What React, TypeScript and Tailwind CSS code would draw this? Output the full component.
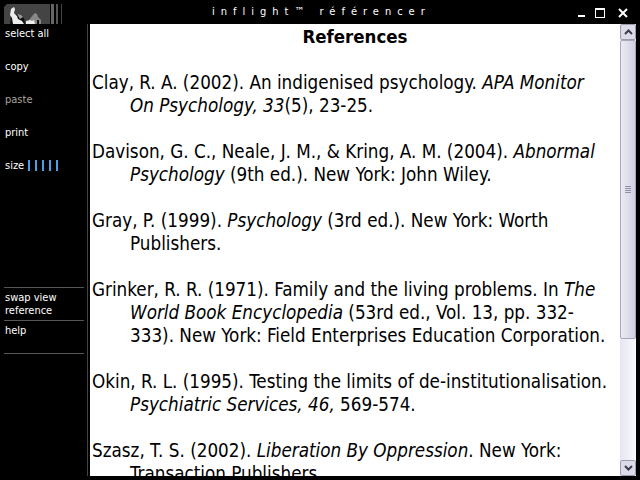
const refs = [
  [<>Clay, R. A. (2002). An indigenised psychology. <i>APA Monitor</i></>, <><i>On Psychology, 33</i>(5), 23-25.</>],
  [<>Davison, G. C., Neale, J. M., &amp; Kring, A. M. (2004). <i>Abnormal</i></>, <><i>Psychology</i> (9th ed.). New York: John Wiley.</>],
  [<>Gray, P. (1999). <i>Psychology</i> (3rd ed.). New York: Worth</>, <>Publishers.</>],
  [<>Grinker, R. R. (1971). Family and the living problems. In <i>The</i></>, <><i>World Book Encyclopedia</i> (53rd ed., Vol. 13, pp. 332-</>, <>333). New York: Field Enterprises Education Corporation.</>],
  [<>Okin, R. L. (1995). Testing the limits of de-institutionalisation.</>, <><i>Psychiatric Services, 46,</i> 569-574.</>],
  [<>Szasz, T. S. (2002). <i>Liberation By Oppression</i>. New York:</>, <>Transaction Publishers.</>],
];

function Sidebar() {
  return (
    <div className="flex w-[87px] shrink-0 flex-col text-[11px] leading-[13px] text-white">
      <div className="flex h-[165px] flex-col">
        <div className="h-[33px] pl-[5px] pt-[3px]">select all</div>
        <div className="h-[33px] pl-[5px] pt-[3px]">copy</div>
        <div className="h-[33px] pl-[5px] pt-[3px] text-[#a8a49c]">paste</div>
        <div className="h-[33px] pl-[5px] pt-[3px]">print</div>
        <div className="flex h-[33px] items-start gap-[4px] pl-[5px] pt-[3px]">
          size
          <span className="flex gap-[5px] pt-px">
            {[1, 2, 3, 4, 5].map((i) => (
              <span key={i} className="h-[11px] w-[2px] bg-[#4a9ee8]" />
            ))}
          </span>
        </div>
      </div>
      <div className="mt-[98px] ml-[4px] w-[80px] border-t border-[#555]">
        <div className="h-[32px] pl-px pt-[3px]">
          swap view<br />reference
        </div>
      </div>
      <div className="ml-[4px] w-[80px] border-t border-[#555]">
        <div className="h-[32px] pl-px pt-[3px]">help</div>
      </div>
      <div className="ml-[4px] w-[80px] border-t border-[#555]" />
    </div>
  );
}

function Logo() {
  return (
    <svg width="58" height="20" viewBox="0 0 58 20" className="block">
      <path d="M3 0H46V20H0V3z" fill="#444" />
      <rect x="47" width="3" height="20" fill="#666" />
      <rect x="52" width="2" height="20" fill="#555" />
      <rect x="57" width="1" height="20" fill="#444" />
      <path d="M8 5l3 5 5 1 4 3 1 6H6z" fill="#111" />
      <path d="M10 3l1 2-1 4 3 3 1 3 4 2 2 3H9l-1-6-2-3 1-6z" fill="#eee" />
      <path d="M13 10l4 1 2 2-3 2z" fill="#999" />
      <path d="M29 11l2-2 2 1 1 3 3 3v4h-9l-3-4z" fill="#888" />
      <path d="M22 17l4-1 2 1 2-1 1 4h-9z" fill="#eee" />
      <path d="M33 16h2v4h-2z" fill="#111" />
    </svg>
  );
}

function Scrollbar() {
  return (
    <div className="flex w-[16px] shrink-0 flex-col bg-[#f1f1f8]">
      <div className="flex h-[16px] items-center justify-center rounded-[2px] border border-[#9c9cb0] bg-[#dcdce8]">
        <svg width="9" height="6" viewBox="0 0 9 6"><path d="M1 5l3.5-3.5L8 5" fill="none" stroke="#3c3c50" strokeWidth="2" /></svg>
      </div>
      <div className="flex h-[299px] items-center justify-center rounded-[2px] border border-[#a8a8bc] bg-gradient-to-r from-[#ecebf4] to-[#d0d0e0]">
        <div className="flex flex-col gap-px">
          <span className="h-px w-[6px] bg-[#9090a8]" />
          <span className="h-px w-[6px] bg-[#9090a8]" />
          <span className="h-px w-[6px] bg-[#9090a8]" />
          <span className="h-px w-[6px] bg-[#9090a8]" />
        </div>
      </div>
      <div className="flex-1 bg-gradient-to-r from-[#e6e6f2] to-[#f8f8fc]" />
      <div className="flex h-[16px] items-center justify-center rounded-[2px] border border-[#9c9cb0] bg-[#dcdce8]">
        <svg width="9" height="6" viewBox="0 0 9 6"><path d="M1 1l3.5 3.5L8 1" fill="none" stroke="#3c3c50" strokeWidth="2" /></svg>
      </div>
    </div>
  );
}

export default function App() {
  return (
    <div className="flex h-[480px] w-[640px] flex-col overflow-hidden bg-black font-['DejaVu_Sans_Condensed','DejaVu_Sans',sans-serif] font-stretch-condensed">
      <div className="flex h-[24px] shrink-0">
        <div className="w-[66px] pl-[4px] pt-[4px]"><Logo /></div>
        <div className="flex-1 pl-[146px] pt-[4px] text-[11px] leading-[15px] tracking-[6px] whitespace-nowrap text-white">
          inflight™ référencer
        </div>
        <div className="flex items-start pr-[12px] pt-[8px]">
          <span className="mt-[7px] h-[2px] w-[7px] bg-white" />
          <span className="ml-[10px] h-[10px] w-[10px] border border-t-2 border-white" />
          <svg width="10" height="10" viewBox="0 0 10 10" className="ml-[13px]"><path d="M1 1l8 8M9 1l-8 8" stroke="#fff" strokeWidth="2" /></svg>
        </div>
      </div>
      <div className="flex min-h-0 flex-1 pb-[4px] pr-[4px]">
        <Sidebar />
        <div className="w-px shrink-0 bg-[#444]" />
        <div className="w-[2px] shrink-0" />
        <div className="min-w-0 flex-1 overflow-hidden bg-white pl-[2px] text-[18.7px] leading-[23px] text-black">
          <h1 className="h-[47px] pr-[2px] pt-px text-center text-[18.5px] font-bold leading-[24px]">References</h1>
          {refs.map((lines, i) => (
            <p key={i} className="mb-[23px] whitespace-nowrap">
              {lines.map((l, j) => (
                <span key={j} className={j ? "block pl-[38px]" : "block"}>{l}</span>
              ))}
            </p>
          ))}
        </div>
        <Scrollbar />
      </div>
    </div>
  );
}
